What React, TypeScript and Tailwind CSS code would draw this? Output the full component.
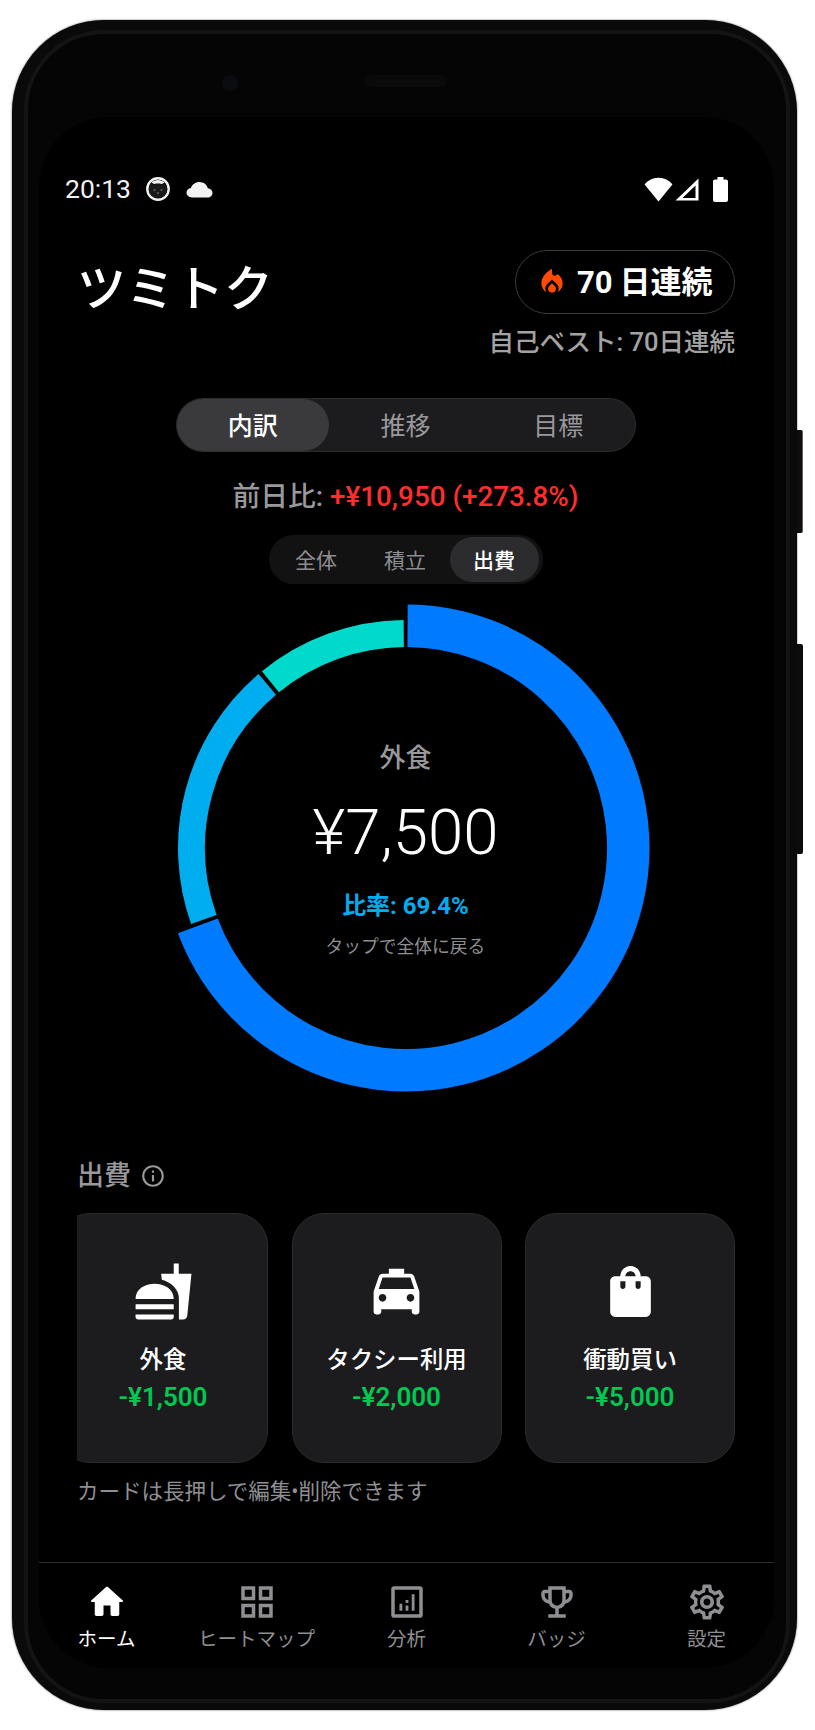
import React from "react";
import {
  MdLocalFireDepartment,
  MdFastfood,
  MdLocalTaxi,
  MdShoppingBag,
  MdOutlineInfo,
  MdOutlineGridView,
  MdOutlineEmojiEvents,
  MdOutlineSettings,
} from "react-icons/md";

const FONT = "font-['Roboto','Noto_Sans_CJK_JP',sans-serif]";

function polar(r: number, deg: number) {
  const a = (deg * Math.PI) / 180;
  return [244 + r * Math.sin(a), 244 - r * Math.cos(a)];
}
function arc(r: number, from: number, to: number) {
  const [x1, y1] = polar(r, from);
  const [x2, y2] = polar(r, to);
  return `M${x1} ${y1}A${r} ${r} 0 ${to - from > 180 ? 1 : 0} 1 ${x2} ${y2}`;
}

function Donut() {
  return (
    <svg width="488" height="488" viewBox="0 0 488 488" className="block">
      <path d={arc(222.25, 0.4, 249.5)} fill="none" stroke="#007aff" strokeWidth="42.5" />
      <path d={arc(214.5, 250.5, 319.7)} fill="none" stroke="#00aeef" strokeWidth="27" />
      <path d={arc(214.5, 320.8, 359.4)} fill="none" stroke="#00d9cc" strokeWidth="27" />
    </svg>
  );
}

function StatusBar() {
  return (
    <div className="flex h-[44px] items-center justify-between pl-[26px] pr-[46px]">
      <div className="flex items-center">
        <span className="text-[26.500px] leading-none text-[#f2f2f2]">20:13</span>
        <svg width="24" height="24" viewBox="0 0 24 24" className="ml-[15px]">
          <circle cx="12" cy="12" r="10.700" fill="none" stroke="#f2f2f2" strokeWidth="2.400" />
          <path d="M3 12c0-2 .8-4.500 2-6 1 1 2 1.500 3 1.500 2.500-.8 5.500-.8 8 0 1 0 2-.5 3-1.500 1.200 1.500 2 4 2 6 0 5-4 9-9 9s-9-4-9-9z" fill="#1a1a1a" />
          <path d="M5.500 5.600C7.200 3.900 9.500 3 12 3s4.800.9 6.500 2.600c-1 .9-2 1.400-3 1.400-2.300-.6-4.700-.6-7 0-1 0-2-.5-3-1.400z" fill="#f2f2f2" />
          <circle cx="8.500" cy="13" r="1" fill="#666" />
          <circle cx="15.500" cy="13" r="1" fill="#666" />
          <circle cx="12" cy="16" r="1" fill="#666" />
        </svg>
        <svg width="27" height="17" viewBox="0 0 27 17" className="ml-[16px]">
          <path d="M6 16.500C2.800 16.500.5 14.300.5 11.600.5 9.100 2.400 7.200 4.900 6.900 6.200 3.500 9.400 1 13.400 1c4.300 0 7.700 2.900 8.400 6.300 2.700.3 4.700 2.200 4.700 4.600 0 2.600-2.200 4.600-5 4.600z" fill="#f2f2f2" />
        </svg>
      </div>
      <div className="flex items-center">
        <svg width="29" height="25" viewBox="0 0 29 25">
          <path d="M14.500 24.500.6 7.400C.9 7 5.600.8 14.500.8s13.600 6.200 13.900 6.600z" fill="#fff" />
        </svg>
        <svg width="24" height="23" viewBox="0 0 24 23" className="ml-[2px]">
          <path fillRule="evenodd" d="M23.500.5v22H.5zM20.500 7.500 7.500 20h13z" fill="#fff" />
        </svg>
        <svg width="15" height="25" viewBox="0 0 15 25" className="ml-[14px]">
          <path d="M4.500 0h6v2.500h2.500c1.100 0 2 .9 2 2V23c0 1.100-.9 2-2 2H2c-1.100 0-2-.9-2-2V4.500c0-1.100.9-2 2-2h2.500z" fill="#fff" />
        </svg>
      </div>
    </div>
  );
}

function Header() {
  return (
    <div className="mt-[39px] flex items-start justify-between pl-[38px] pr-[39px]">
      <h1 className="mt-[8px] h-[64px] text-[49px] font-medium leading-[64px] text-white">ツミトク</h1>
      <div className="flex flex-col items-end">
        <div className="flex h-[64px] w-[220px] items-center rounded-full border border-[#3a3a3c] pl-[20px]">
          <MdLocalFireDepartment size={32} color="#ff4a00" />
          <span className="ml-[9px] text-[31px] font-bold leading-none text-white">70</span>
          <span className="ml-[7px] text-[31px] font-semibold leading-none text-white">日連続</span>
        </div>
        <p className="mt-[10px] h-[36px] text-[25.500px] font-medium leading-[36px] text-[#a3a3a3]">自己ベスト: 70日連続</p>
      </div>
    </div>
  );
}

function MainTabs() {
  return (
    <div className="mx-auto mt-[38px] grid h-[54px] w-[460px] grid-cols-3 rounded-full border border-[#2c2c2e] bg-[#1c1c1e] text-[25px] leading-none">
      <div className="flex items-center justify-center rounded-full bg-[#3a3a3c] pt-[3px] font-medium text-white">内訳</div>
      <div className="flex items-center justify-center pt-[3px] text-[#98989d]">推移</div>
      <div className="flex items-center justify-center pt-[3px] text-[#98989d]">目標</div>
    </div>
  );
}

function Delta() {
  return (
    <p className="mt-[27px] h-[36px] text-center text-[27.800px] font-medium leading-[36px] text-[#98989d]">
      前日比: <span className="text-[#ff2d2d]">+¥10,950 (+273.8%)</span>
    </p>
  );
}

function SubTabs() {
  return (
    <div className="mx-auto mt-[20px] grid h-[49px] w-[274px] grid-cols-3 rounded-full bg-[#121212] py-[2px] pl-[3px] pr-[4px] text-[21px] leading-none">
      <div className="flex items-center justify-center pt-[3px] text-[#8e8e93]">全体</div>
      <div className="flex items-center justify-center pt-[3px] text-[#8e8e93]">積立</div>
      <div className="flex items-center justify-center rounded-full bg-[#2c2c2e] pt-[3px] font-medium text-white">出費</div>
    </div>
  );
}

function Chart() {
  return (
    <div className="relative mx-auto mt-[20px] h-[488px] w-[488px]">
      <Donut />
      <div className="absolute inset-0 flex flex-col items-center">
        <p className="mt-[136px] h-[36px] text-[26px] font-medium leading-[36px] text-[#98989d]">外食</p>
        <p className="mt-[17px] h-[80px] text-[63.500px] font-light leading-[80px] text-white">¥7,500</p>
        <p className="mt-[16px] h-[34px] text-[24px] font-bold leading-[34px] text-[#00aeef]">比率: 69.4%</p>
        <p className="mt-[10px] h-[28px] text-[17.750px] leading-[28px] text-[#8e8e93]">タップで全体に戻る</p>
      </div>
    </div>
  );
}

type Item = { name: string; amount: string; icon: React.ReactNode };

function Card({ item }: { item: Item }) {
  return (
    <div className="flex h-[250px] w-[210px] shrink-0 flex-col items-center rounded-[32px] border border-[#2c2c2e] bg-[#1c1c1e] pt-[47px]">
      <div className="h-[61px]">{item.icon}</div>
      <p className="mt-[21px] h-[34px] text-[23.400px] font-medium leading-[34px] text-white">{item.name}</p>
      <p className="mt-[2px] h-[36px] text-[26px] font-semibold leading-[36px] text-[#00c853]">{item.amount}</p>
    </div>
  );
}

function Expenses() {
  const items: Item[] = [
    { name: "外食", amount: "-¥1,500", icon: <MdFastfood size={61} color="#fff" /> },
    { name: "タクシー利用", amount: "-¥2,000", icon: <MdLocalTaxi size={61} color="#fff" /> },
    { name: "衝動買い", amount: "-¥5,000", icon: <MdShoppingBag size={61} color="#fff" /> },
  ];
  return (
    <>
      <div className="mt-[66px] flex h-[36px] items-center">
        <span className="text-[27px] font-medium leading-none text-[#98989d]">出費</span>
        <MdOutlineInfo size={26} color="#98989d" className="ml-[9px]" />
      </div>
      <div className="-mr-[1px] mt-[19px] flex justify-end gap-[23.500px] overflow-hidden">
        {items.map((it) => (
          <Card key={it.name} item={it} />
        ))}
      </div>
      <p className="mt-[14px] h-[30px] whitespace-nowrap text-[21.500px] leading-[30px] text-[#8e8e93]">カードは長押しで編集•削除できます</p>
    </>
  );
}

function HomeIcon() {
  return (
    <svg width="42" height="42" viewBox="0 0 24 24" fill="#fff">
      <path d="M10 19v-5h4v5c0 .55.45 1 1 1h3c.55 0 1-.45 1-1v-7h1.700c.46 0 .68-.57.33-.87L12.670 3.600c-.38-.34-.96-.34-1.340 0l-8.360 7.530c-.34.3-.13.87.33.87H5v7c0 .55.45 1 1 1h3c.55 0 1-.45 1-1z" />
    </svg>
  );
}

function AnalyticsIcon() {
  return (
    <svg width="42" height="42" viewBox="0 0 24 24" fill="#8e8e93">
      <path fillRule="evenodd" d="M4.500 3h15C20.330 3 21 3.670 21 4.500v15c0 .83-.67 1.500-1.500 1.500h-15C3.670 21 3 20.330 3 19.500v-15C3 3.670 3.670 3 4.500 3zM5 5v14h14V5z" />
      <path d="M7.700 13h1.600v4H7.700zM11.200 14h1.600v3h-1.600zM11.200 10.800h1.600v1.800h-1.600zM14.700 7.500h1.600V17h-1.600z" />
    </svg>
  );
}

function BottomNav() {
  const tabs = [
    { label: "ホーム", icon: <HomeIcon />, active: true },
    { label: "ヒートマップ", icon: <MdOutlineGridView size={42} color="#8e8e93" />, active: false },
    { label: "分析", icon: <AnalyticsIcon />, active: false },
    { label: "バッジ", icon: <MdOutlineEmojiEvents size={42} color="#8e8e93" />, active: false },
    { label: "設定", icon: <MdOutlineSettings size={42} color="#8e8e93" />, active: false },
  ];
  return (
    <nav className="flex h-[106px] justify-center border-t border-[#2c2c2e] pt-[18px]">
      {tabs.map((t) => (
        <div key={t.label} className="flex w-[150px] shrink-0 flex-col items-center">
          <div className="h-[42px]">{t.icon}</div>
          <span className={`mt-[3px] h-[28px] text-[19.500px] leading-[28px] ${t.active ? "text-white" : "text-[#8e8e93]"}`}>{t.label}</span>
        </div>
      ))}
    </nav>
  );
}

export default function App() {
  return (
    <div className={`${FONT} h-[1730px] w-[815px] overflow-hidden bg-white pl-[12px] pt-[20px]`}>
      <div className="relative h-[1690px] w-[785px] rounded-[92px] bg-[#0a0a0a] pb-[7px] pl-[12px] pr-[7px] pt-[10px] shadow-[0_0_2px_rgba(0,0,0,0.7)]">
        <div className="absolute -right-[6px] top-[410px] h-[103px] w-[6px] rounded-r-[2px] border-r border-[#6b5a55] bg-[#0e0e0e]" />
        <div className="absolute -right-[6px] top-[624px] h-[210px] w-[6px] rounded-r-[2px] bg-[#0c0c0c]" />
        <div className="relative h-full rounded-[80px] border-[4px] border-[#141414] bg-[#050505] pl-[11px] pt-[83px]">
          <div className="absolute left-[194px] top-[41px] h-[16px] w-[16px] rounded-full bg-[#0a0c0f]" />
          <div className="absolute left-[336px] top-[41px] h-[12px] w-[83px] rounded-full bg-[#0a0a0a]" />
          <div className="flex h-[1551px] w-[735px] flex-col overflow-hidden rounded-[70px] bg-black pt-[50px]">
            <StatusBar />
            <Header />
            <div className="flex flex-1 flex-col pl-[38px] pr-[40px]">
              <MainTabs />
              <Delta />
              <SubTabs />
              <Chart />
              <Expenses />
            </div>
            <BottomNav />
          </div>
        </div>
      </div>
    </div>
  );
}
